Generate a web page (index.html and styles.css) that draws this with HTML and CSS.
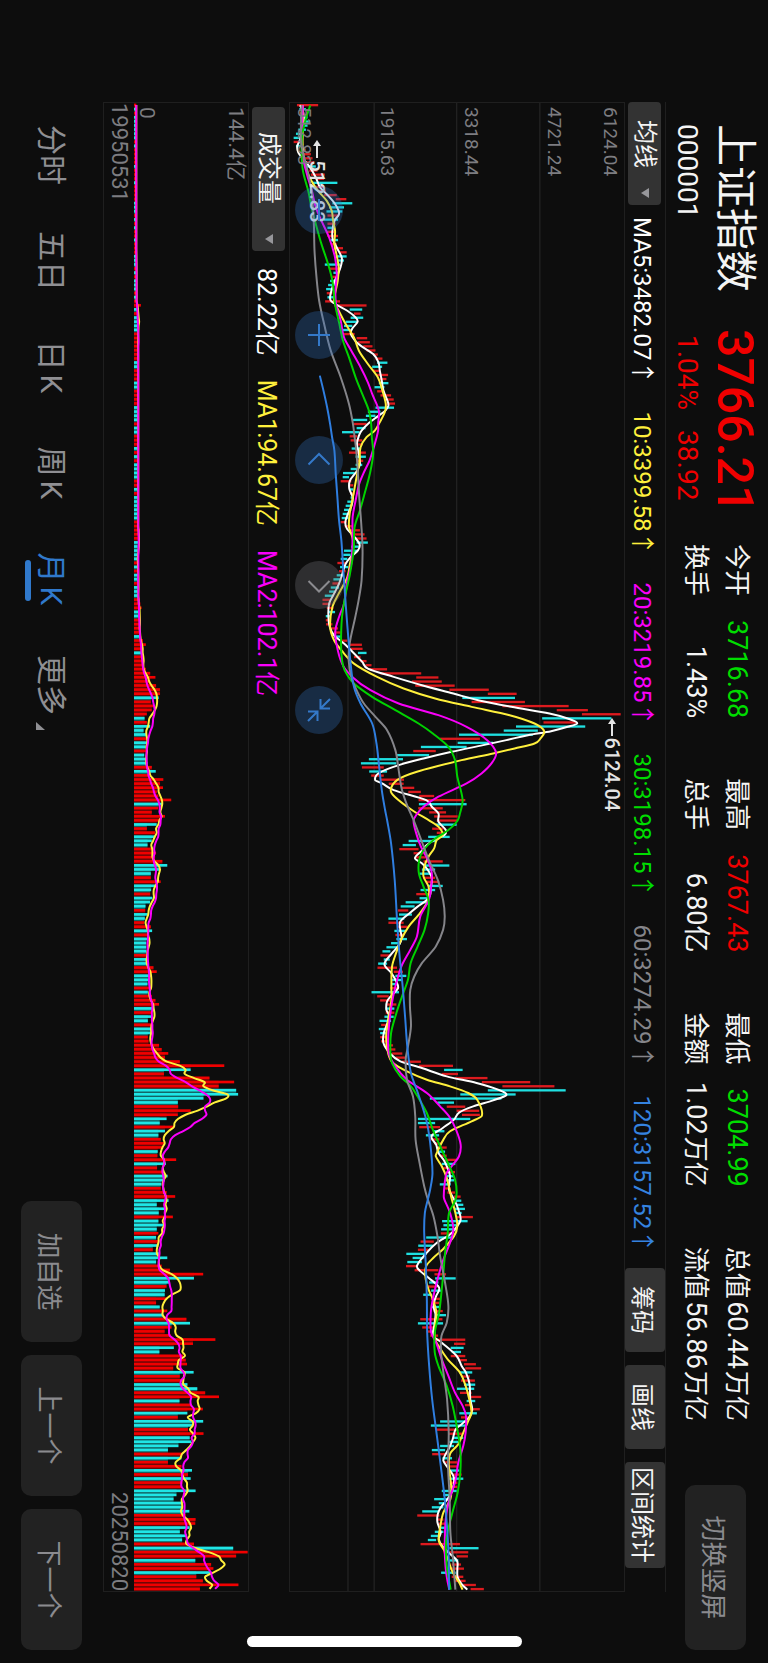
FILE: index.html
```html
<!DOCTYPE html>
<html lang="zh-CN">
<head>
<meta charset="utf-8">
<meta name="viewport" content="width=device-width, initial-scale=1">
<title>上证指数 000001</title>
<link rel="stylesheet" href="styles.css">
</head>
<body>
<main class="stage">
  <header class="quote-bar">
    <div class="quote">
      <h1 class="name">上证指数</h1>
      <strong class="price">3766.21</strong>
      <span class="code">000001</span>
      <span class="change"><span>1.04%</span><span>38.92</span></span>
    </div>
    <dl class="stats">
      <div class="stat"><dt>今开</dt><dd class="down">3716.68</dd></div>
      <div class="stat"><dt>最高</dt><dd class="up">3767.43</dd></div>
      <div class="stat"><dt>最低</dt><dd class="down">3704.99</dd></div>
      <div class="stat"><dt>总值</dt><dd>60.44<span class="unit">万亿</span></dd></div>
      <div class="stat"><dt>换手</dt><dd>1.43%</dd></div>
      <div class="stat"><dt>总手</dt><dd>6.80亿</dd></div>
      <div class="stat"><dt>金额</dt><dd>1.02<span class="unit">万亿</span></dd></div>
      <div class="stat"><dt>流值</dt><dd>56.86<span class="unit">万亿</span></dd></div>
    </dl>
    <button class="soft-button switch" type="button">切换竖屏</button>
  </header>

  <section class="ma-row">
    <button class="picker" type="button">均线<svg class="caret" viewBox="0 0 10 8"><path d="M0 0h10L5 8z"/></svg></button>
    <ul class="ma-list">
      <li class="c-white">MA5:3482.07<span>↑</span></li>
      <li class="c-yellow">10:3399.58<span>↑</span></li>
      <li class="c-magenta">20:3219.85<span>↑</span></li>
      <li class="c-green">30:3198.15<span>↑</span></li>
      <li class="c-gray">60:3274.29<span>↑</span></li>
      <li class="c-blue">120:3157.52<span>↑</span></li>
    </ul>
    <div class="tools">
      <button class="tool" type="button">筹码</button>
      <button class="tool" type="button">画线</button>
      <button class="tool tight" type="button">区间统计</button>
    </div>
  </section>

  <section class="pane price-pane">
    <svg class="plot" id="price" viewBox="0 0 4470 1008" preserveAspectRatio="none"></svg>
    <div class="axis">
      <div class="band first"><span>6124.04</span><span>4721.24</span></div>
      <div class="band"><span>3318.44</span></div>
      <div class="band"><span>1915.63</span></div>
      <div class="band"><span>512.83</span></div>
    </div>
    <span class="callout high"><svg viewBox="0 0 18 10"><path d="M5 5h13" stroke="#e4e4e4" stroke-width="2"/><path d="M0 5l6-4v8z" fill="#e4e4e4"/></svg>6124.04</span>
    <span class="callout low"><svg viewBox="0 0 18 10"><path d="M5 5h13" stroke="#e4e4e4" stroke-width="2"/><path d="M0 5l6-4v8z" fill="#e4e4e4"/></svg>512.83</span>
    <nav class="controls">
      <button type="button" aria-label="缩小"><svg viewBox="0 0 48 48"><path d="M13 24h22"/></svg></button>
      <button type="button" aria-label="放大"><svg viewBox="0 0 48 48"><path d="M13 24h22M24 13v22"/></svg></button>
      <button type="button" aria-label="向前"><svg viewBox="0 0 48 48"><path d="M28.500 13.500L18 24l10.500 10.500"/></svg></button>
      <button type="button" aria-label="向后" class="off"><svg viewBox="0 0 48 48"><path d="M20 13.500L30.500 24L20 34.500"/></svg></button>
      <button type="button" aria-label="收起"><svg viewBox="0 0 48 48"><path d="M13 13l9 9M22.500 13v9.500H13M35 35l-9-9M25.500 35v-9.500H35"/></svg></button>
    </nav>
  </section>

  <section class="volume-row">
    <button class="picker wide" type="button">成交量<svg class="caret" viewBox="0 0 10 8"><path d="M0 0h10L5 8z"/></svg></button>
    <ul class="volume-list">
      <li class="c-white">82.22亿</li>
      <li class="c-yellow">MA1:94.67亿</li>
      <li class="c-magenta">MA2:102.1亿</li>
    </ul>
  </section>

  <section class="pane volume-pane">
    <svg class="plot" id="volume" viewBox="0 0 4470 346" preserveAspectRatio="none"></svg>
    <div class="volume-axis"><span>144.4亿</span><span>0</span></div>
  </section>

  <div class="dates"><time>19950531</time><time>20250820</time></div>

  <footer class="bottom">
    <nav class="tabs">
      <button type="button" class="tab">分时</button>
      <button type="button" class="tab">五日</button>
      <button type="button" class="tab">日<span>K</span></button>
      <button type="button" class="tab">周<span>K</span></button>
      <button type="button" class="tab active">月<span>K</span></button>
      <button type="button" class="tab more">更多<svg viewBox="0 0 8 9"><path d="M8 0v9H0z"/></svg></button>
    </nav>
    <div class="actions">
      <button class="soft-button" type="button">加自选</button>
      <button class="soft-button" type="button">上一个</button>
      <button class="soft-button" type="button">下一个</button>
    </div>
  </footer>
</main>
<div class="home-bar"></div>
<script src="chart.js"></script>
</body>
</html>
```

FILE: styles.css
```css
* {
  box-sizing: border-box;
}

html,
body {
  margin: 0;
  height: 100%;
  background: #0d0d0d;
  overflow: hidden;
}

body {
  position: relative;
  font-family: Roboto, "Noto Sans CJK SC", sans-serif;
  color: #f4f4f4;
}

button {
  margin: 0;
  padding: 0;
  border: 0;
  background: none;
  color: inherit;
  font: inherit;
  white-space: nowrap;
}

ul,
dl,
dd,
h1 {
  margin: 0;
  padding: 0;
  list-style: none;
  font-weight: 400;
}

/* Landscape stage turned a quarter clockwise inside a portrait window */
.stage {
  position: absolute;
  top: 0;
  left: 0;
  width: 100vh;
  height: 100vw;
  transform-origin: 0 0;
  transform: rotate(90deg) translateY(-100%);
  display: grid;
  grid-template-columns: minmax(0, 1fr);
  grid-template-rows: 102px 41px 1fr 40px 115px 31px 103px;
  white-space: nowrap;
}

/* Header */
.quote-bar {
  display: flex;
  align-items: center;
  padding: 2px 13px 0 124px;
}

.quote {
  flex: none;
  align-self: flex-start;
  width: 420px;
  display: grid;
  grid-template-columns: 205px 1fr;
  grid-template-rows: 62px 34px;
  align-items: center;
}

.name {
  font-size: 42px;
  line-height: 62px;
}

.price {
  font-size: 50px;
  font-weight: 500;
  line-height: 62px;
  color: #f00000;
}

.code,
.change {
  font-size: 28px;
  line-height: 34px;
}

.change {
  display: flex;
  gap: 20px;
  padding-left: 6px;
  color: #f00000;
}

.stats {
  flex: 1;
  display: grid;
  grid-template-columns: repeat(4, 1fr);
  column-gap: 60px;
}

.stat {
  display: flex;
  justify-content: space-between;
  font-size: 26px;
  line-height: 41px;
}

.stat dd {
  font-size: 27px;
}

.unit {
  margin-left: 2px;
  font-size: 25px;
}

.up {
  color: #f00000;
}

.down {
  color: #00dc00;
}

.soft-button {
  height: 61px;
  border-radius: 10px;
  background: #222222;
  color: #8b8b8f;
  font-size: 26px;
}

.switch {
  flex: none;
  width: 165px;
  margin-left: 64px;
}

/* Moving averages */
.ma-row {
  margin: 0 71px 0 102px;
  border-top: 1px solid #1f1f1f;
  display: flex;
  align-items: center;
}

.picker {
  flex: none;
  height: 33px;
  padding: 0 7px 0 18px;
  border-radius: 4px;
  background: #333333;
  font-size: 24px;
  line-height: 33px;
  display: flex;
  align-items: center;
  gap: 20px;
}

.picker.wide {
  padding-left: 25px;
  gap: 30px;
}

.caret {
  width: 10px;
  height: 8px;
  fill: #97979b;
}

.ma-list {
  display: flex;
  gap: 27px;
  margin-left: 12px;
  font-size: 24px;
}

.ma-list span {
  font-family: "Noto Sans CJK SC", sans-serif;
}

.c-white { color: #ffffff; }
.c-yellow { color: #fff03c; }
.c-magenta { color: #fa00fa; }
.c-green { color: #00dc00; }
.c-gray { color: #85858a; }
.c-blue { color: #3583e0; }

.tools {
  display: flex;
  gap: 13px;
  margin-left: auto;
  padding-right: 24px;
}

.tool {
  height: 40px;
  padding: 0 18px;
  border-radius: 4px;
  background: #333333;
  font-size: 24px;
}

.tool.tight {
  padding: 0 5px;
}

/* Chart panes */
.pane {
  position: relative;
  margin: 0 71px 0 102px;
  border: 1px solid #1f1f1f;
  min-height: 0;
}

.volume-pane {
  border-bottom: 0;
}

.plot {
  position: absolute;
  inset: 0;
  width: 100%;
  height: 100%;
}

.axis {
  position: absolute;
  inset: 0;
  display: grid;
  grid-template-rows: repeat(4, 1fr);
  padding-left: 4px;
  font-size: 19px;
  line-height: 28px;
  color: #7d7d81;
}

.band {
  display: flex;
  flex-direction: column;
  justify-content: flex-end;
}

.band.first {
  justify-content: space-between;
}

.callout {
  position: absolute;
  display: flex;
  align-items: center;
  gap: 2px;
  font-size: 20px;
  font-weight: 500;
  line-height: 24px;
  color: #e4e4e4;
}

.callout svg {
  width: 18px;
  height: 10px;
}

.callout.high {
  left: 41.3%;
  top: 0;
}

.callout.low {
  left: 2.5%;
  bottom: 15px;
}

.controls {
  position: absolute;
  left: 83px;
  bottom: 5px;
  display: flex;
  gap: 77px;
}

.controls button {
  width: 48px;
  height: 48px;
  border-radius: 50%;
  background: rgba(50, 115, 195, 0.3);
}

.controls .off {
  background: rgba(110, 110, 115, 0.35);
}

.controls svg {
  display: block;
  width: 48px;
  height: 48px;
  fill: none;
  stroke: #3479c9;
  stroke-width: 2;
}

.controls .off svg {
  stroke: #8b8b8f;
}

/* Volume */
.volume-row {
  margin: 0 71px 0 107px;
  display: flex;
  align-items: center;
}

.volume-list {
  display: flex;
  gap: 24px;
  margin-left: 17px;
  font-size: 25px;
}

.volume-axis {
  position: absolute;
  inset: 0;
  display: flex;
  flex-direction: column;
  justify-content: space-between;
  padding-left: 4px;
  font-size: 21px;
  line-height: 25px;
  color: #7d7d81;
}

.dates {
  margin: 0 71px 0 102px;
  border: 1px solid #1f1f1f;
  border-top: 0;
  display: flex;
  justify-content: space-between;
  font-size: 22px;
  line-height: 30px;
  color: #7d7d81;
}

/* Bottom bar */
.bottom {
  display: flex;
  justify-content: space-between;
  align-items: center;
  padding: 0 13px 0 102px;
}

.tabs {
  display: flex;
}

.tab {
  position: relative;
  width: 106px;
  height: 52px;
  font-size: 30px;
  line-height: 52px;
  color: #8f8f93;
}

.tab span {
  margin-left: 4px;
}

.tab.active {
  color: #3079cc;
}

.tab.active::after {
  content: "";
  position: absolute;
  left: 34px;
  bottom: 0;
  width: 41px;
  height: 6px;
  border-radius: 3px;
  background: #3079cc;
}

.tab.more svg {
  position: absolute;
  right: 8px;
  bottom: 11px;
  width: 8px;
  height: 9px;
  fill: #8f8f93;
}

.actions {
  display: flex;
  gap: 13px;
}

.actions .soft-button {
  width: 141px;
}

.home-bar {
  position: absolute;
  left: 50%;
  bottom: 16px;
  width: 275px;
  height: 11px;
  margin-left: -137px;
  border-radius: 6px;
  background: #ffffff;
}
```

FILE: chart.js
```js
const NS = "http://www.w3.org/2000/svg";
const STEP = 4470 / 364;
const RED = "#dc1a1e";
const CYAN = "#1fdfe0";

// Monthly ranges, oldest first: r = rising, c = falling, then low-high
const candles = `
r48-112 c55-75 r55-70 c58-80 c60-88 c60-80 c52-75 c45-60 c38-60 r38-55
c45-60 r62-75 r60-90 r65-95 r75-100 c78-105 r85-110 r90-132 r105-130 c95-170
r105-130 r115-135 r130-168 r165-197 c155-215 c145-190 c137-185 r140-175 c128-172 r140-165
c140-158 r137-160 r140-172 c150-172 r152-168 r160-187 r178-198 c165-198 c170-190 c132-178
r145-180 c158-175 r155-172 c148-168 c142-162 c136-158 r138-155 c140-160 r133-178 r160-258
c207-245 r220-240 c210-248 c195-230 c190-215 c185-210 r185-222 r228-260 r232-268 r248-276
r258-285 r278-292 r285-306 c290-321 c275-305 r278-298 r290-323 r298-318 c295-324 c282-312
r290-312 r300-332 r315-340 r318-344 c285-341 c262-300 c256-285 c216-260 r220-258 c228-255
c184-237 r207-230 r210-245 r225-245 c213-240 r205-256 c225-256 r232-248 c225-245 c210-230
c187-222 c186-205 r180-212 r205-218 c205-218 r208-222 c210-220 c200-215 c195-212 c190-212
c186-205 c183-203 r180-198 r192-215 r205-238 r215-252 r225-258 c228-262 c212-235 c190-230
c188-210 c180-200 r170-195 c178-203 r175-195 c168-188 c158-182 r155-178 c150-175 c145-165
c132-158 r125-148 r125-150 r138-158 c142-163 c135-150 r135-150 r136-155 r150-172 r160-180
c160-182 r178-200 r205-244 r210-246 c232-258 r220-240 r240-258 r255-273 r268-320 r300-423
r408-475 r395-485 r405-524 r508-627 r624-711 c547-706 r575-736 r668-868 r832-926 r908-1025
c788-997 r792-890 c709-918 c672-775 c537-760 r480-600 c533-640 c422-560 r399-467 c350-447
c265-368 c241-348 r244-310 c266-320 r272-310 r300-371 r325-370 r362-402 r384-422 r417-462
r415-556 c416-560 r414-488 r447-498 r462-533 r470-532 c468-530 r456-490 r470-500 c444-509
c385-470 c367-407 r357-415 r400-430 r405-440 r430-488 c430-508 c425-465 c418-450 r430-465
r440-478 c445-488 c421-465 r408-447 c418-447 c376-445 c361-403 r353-384 c356-395 c324-372
r324-370 r352-382 c342-378 r345-370 c348-380 c332-362 c318-352 c306-330 r300-330 c310-328
c293-320 r291-350 r340-368 c345-378 c335-365 c332-352 r330-355 c273-356 r290-325 r299-330
r318-348 c315-342 r316-342 c312-340 c297-332 r302-325 c295-322 c299-320 r299-318 r302-318
r310-338 r325-345 r335-366 r345-377 r365-422 r416-519 c492-548 r485-534 r525-623 r606-752
r668-825 c624-859 c541-708 c449-665 c472-522 r500-556 r530-598 r546-600 c413-571 c413-465
r417-480 c460-493 c437-477 r447-478 r462-485 r470-500 c470-495 r478-500 r495-531 c485-526
r490-510 r500-525 c495-522 c495-522 c479-512 r495-512 r502-525 r522-542 c528-544 c528-550
c525-555 c525-545 r530-579 c486-563 c490-530 c483-528 r482-515 c438-515 r421-461 c414-458
r413-445 c378-440 c397-430 c381-425 r377-412 r403-475 r463-498 c465-527 c447-475 r443-470
c453-483 c429-456 r452-480 r455-478 c455-478 r460-488 c465-498 r420-487 c413-489 r426-460
r440-465 r450-474 r462-556 r522-556 c512-551 c515-543 r512-556 r535-561 r552-588 r556-604
c538-577 r545-570 r543-585 c552-586 c531-583 r540-575 r565-604 c560-586 r555-575 r570-600
c538-591 r543-565 c480-558 c452-556 r469-535 r507-548 c520-550 c508-535 c480-522 c455-495
r456-500 c487-516 r495-532 r500-532 c512-538 r520-545 c505-550 r510-532 r510-532 c485-530
c490-510 c462-505 c476-492 c455-490 c426-475 r411-478 r472-490 r475-497 c480-498 c464-490
c452-480 c443-468 r421-540 c508-596 r490-565 r530-564 c508-535 r515-543 r510-552 c483-527
r515-550 r525-557 r550-588 r572-612`.trim().split(/\s+/).map(t => {
  const [lo, hi] = t.slice(1).split("-").map(Number);
  return { up: t[0] === "r", lo, hi };
});

// Moving averages: each chunk starts with its origin, then "along level" pairs
const averages = [
  ["#ffffff", `
@-36 43 57,60 66,90 68,110 62,145 58,165 49,185 52,205 68,230 88,260 105,290 118,310 138,335 160,360 174,372 174,388 162,420 155,445 156,470 168,500 183,520 182,545 174,570 162,600 152,628 149,642 168,660 200,680 225,693 231,712 216,728 210,748 222,765 240,790 278,815 294,840 298,870 304,900 309,930 321,945 324,960 315,975 295,1000 262
@984 0 243,15 235,40 229,65 234,100 238,120 230,150 208,175 206,200 216,225 213,250 202,275 194,295 199,320 222,342 237,360 232,380 210,400 195,430 185,460 175,490 160,520 145,560 143,590 147,615 160,640 190,665 216,695 245,715 262,740 340,765 425,790 520,810 595,830 695,850 810,865 865,879 894,890 865,903 815,915 745,930 680,945 610,965 515,985 430,1005 355,1028 297,1050 284,1060 305,1080 340,1110 438,1130 455,1150 475
@2154 5 475,30 497,45 493,55 470,75 440,92 425,115 404,130 425,150 443,175 455,205 452,225 450,240 440,260 412,280 388,305 360,330 360,355 364,375 356,400 335,433 312,460 333,485 348,505 353,525 335,545 320,570 318,585 325,610 321,640 310,670 309,700 328,725 360,745 425,770 500,790 590,810 655,826 680,842 640,860 580,878 538,900 522,925 488,950 454,975 468,1000 475,1020 490,1040 500,1070 510,1110 507
@3294 5 525,30 535,60 542,85 528,105 510,130 470,165 435,200 410,215 420,235 445,265 477,290 468,305 463,325 461,345 466,375 463,410 460,430 485,470 530,500 545,520 558,555 569,600 571,632 577,655 567,675 545,690 527,720 518,745 508,770 494,785 490,805 503,830 520,850 522,880 515,905 498,925 482,945 473,970 472,1000 482,1020 476,1040 486,1060 505,1085 531,1110 532,1135 533,1155 545,1172 562`],
  ["#fff03c", `
@-36 43 66,100 67,150 65,200 68,240 78,270 92,300 112,330 138,360 153,390 157,420 163,460 161,490 167,530 174,570 171,600 165,630 160,660 174,700 195,740 220,780 235,820 262,860 292,900 306,940 316,965 313,1000 295
@984 0 283,20 258,50 240,90 237,150 226,200 217,250 207,290 205,310 212,330 217,360 217,400 208,440 200,490 174,530 155,590 148,630 160,660 182,700 220,740 290,775 370,805 465,830 575,855 690,880 765,903 794,925 783,940 765,955 705,970 640,990 545,1025 410,1050 350,1080 331,1100 343,1140 395
@2154 3 450,20 475,45 488,60 470,85 462,110 445,140 432,170 430,200 445,230 446,250 440,285 415,320 385,360 362,400 347,440 335,500 333,540 333,600 324,650 317,700 323,730 338,755 380,780 440,800 510,820 565,840 592,888 606,905 575,935 510,960 490,1000 470,1010 467,1040 485,1075 500,1130 513
@3294 40 526,80 532,110 522,150 488,175 460,200 438,235 436,270 445,300 458,340 469,380 465,420 465,450 482,480 503,520 540,560 557,600 568,640 575,665 565,700 550,735 535,760 512,790 506,830 510,870 514,900 511,940 490,980 481,1025 476,1055 493,1085 505,1120 518,1150 537,1172 548`],
  ["#fa00fa", `
@-36 43 66,100 64,150 62,200 66,250 78,300 93,350 105,390 122,440 145,500 163,550 168,600 164,640 166,690 180,740 190,780 212,830 240,875 262,910 275,960 295,1000 293
@984 0 293,50 280,90 267,130 248,160 236,210 225,260 216,320 216,400 212,450 200,520 190,560 175,600 164,640 167,700 184,740 215,780 270,820 355,855 475,890 560,930 622,968 649,1000 635,1030 605,1060 560,1100 475,1130 430,1155 408
@2154 3 400,40 408,80 422,120 443,160 455,200 453,240 446,290 420,350 410,390 390,440 363,500 345,560 333,640 324,700 325,740 345,780 380,820 440,860 480,890 507,930 528,975 542,1010 537,1040 515,1060 500,1090 494,1130 491
@3294 0 493,40 510,90 520,130 510,180 490,230 475,290 460,340 452,400 453,430 468,480 485,530 505,580 525,620 548,650 558,700 557,740 550,790 535,850 525,900 508,960 497,1050 494,1110 497,1145 502,1172 508`],
  ["#00d200", `
@-36 43 88,80 76,130 64,180 62,240 66,300 82,350 92,400 105,460 122,520 142,570 155,640 163,700 176,750 187,800 205,860 225,910 245,960 265,1000 272
@984 20 274,70 278,130 268,190 252,240 238,290 222,360 219,430 208,490 195,560 184,640 181,690 184,720 192,760 220,800 275,840 345,880 415,910 458,950 505,990 525,1040 532,1110 548,1150 540
@2154 3 532,30 505,60 460,90 430,120 417,160 416,200 430,240 445,280 444,330 433,380 412,430 391,480 383,530 365,580 348,640 332,700 330,730 335,770 360,800 392,830 412,880 440,930 458,980 480,1040 508,1080 525,1120 530
@3294 5 525,40 507,100 503,160 495,220 490,280 484,340 477,400 464,460 464,500 475,560 500,620 518,680 530,750 541,820 541,880 533,930 520,980 507,1030 498,1100 500,1172 512`],
  ["#85858a", `
@-36 43 62,150 60,200 70,240 80,300 92,400 99,480 101,560 107,630 115,700 130,780 150,860 180,940 205,1000 217
@984 20 222,60 227,130 232,200 236,280 242,360 246,450 243,510 234,560 224,640 207,690 204,740 212,780 228,820 250,860 285,900 320,960 345,1020 355,1080 365,1130 382
@2154 0 400,60 423,120 446,180 473,240 489,290 494,330 489,380 467,430 425,470 402,510 390,560 389,620 392,680 383,720 376,780 380,830 398,890 405,960 406,1030 418,1100 432
@3294 0 443,50 460,110 472,170 480,250 495,320 505,370 500,410 484,460 483,520 490,600 501,700 506,800 504,900 509,1000 511,1080 519,1172 526`],
  ["#2f7ee0", `
@-36 855 117,900 128,950 139,1000 148
@984 20 154,60 161,130 165,200 170,270 175,330 182,390 186,450 190,560 198,700 210,770 220,820 240,880 275,940 288,1000 295,1080 304,1140 314
@2154 0 320,70 332,180 343,300 350,400 357,500 367,600 375,680 381,760 392,820 413,900 438,970 450,1060 457,1110 450
@3294 0 443,40 434,100 432,200 437,300 440,400 441,500 447,600 456,700 469,800 482,900 494,1000 502,1080 506,1172 507`]
];

// Monthly volume, baseline 401, ceiling 747
const volumes = (
  "408 ".repeat(36) + "409 ".repeat(13) + "422 416 415 414 416 414 413 413 " + "414 ".repeat(47) + `
418 418 417 414 412 412 412 412 416 414 416 414 414 416 414 414 413 418 420 424
416 415 420 420 421 421 420 428 437 430 422 430 432 432 437 450 466 450 468 480
480 476 452 460 455 440 433 440 450 430 440 445 442 436 440 432 440 442 455 467
450 490 480 489 470 475 514 486 475 455 495 480 470 440 465 465 455 442 455 468
465 487 502 478 452 452 482 466 453 450 457 450 436 435 443 434 432 452 456 445
450 438 438 438 442 440 442 460 470
452 445 442 455 443 455 466 477 462 455 455 443 457 455 455 443 445 477 485 505
495 540 675 573 492 630 705 658 711 717 612 534 535 573 534 500 479 524 495 475
482 495 490 473 472 529 498 471 487 503 495 484 482 500 526 506 470 500 476 519
475 492 470 475 468 475 475 458 478 502 468 485 510 611 583 510 500 495 494 500
468 479 502 490 560 571 515 494 512 648 580 522 478 550 558 562 520 582 540 550
563 593 617 659 539 575 610 563 534 611 580 565 612 570 575 536 504 548 545 504
545 577 565 573 548 545 588 530 521 548 550 569 558 588 587 570 540 562 547 583
702 746 711 587 635 642 632 590 610 718 601`).trim().split(/\s+/).map(Number).slice(-364);

function add(svg, tag, attrs) {
  const el = document.createElementNS(NS, tag);
  for (const key in attrs) el.setAttribute(key, attrs[key]);
  svg.appendChild(el);
}

function smooth(points) {
  let d = `M${points[0][0]} ${points[0][1]}`;
  for (let i = 0; i < points.length - 1; i++) {
    const a = points[i - 1] || points[i], b = points[i];
    const c = points[i + 1], e = points[i + 2] || c;
    const third = (c[0] - b[0]) / 3;
    const s1 = (c[1] - a[1]) / (c[0] - a[0] || 1);
    const s2 = (e[1] - b[1]) / (e[0] - b[0] || 1);
    d += `C${b[0] + third} ${b[1] + s1 * third} ${c[0] - third} ${c[1] - s2 * third} ${c[0]} ${c[1]}`;
  }
  return d;
}

function parse(text) {
  const out = [];
  text.trim().split("\n").forEach(row => {
    const cut = row.indexOf(" ");
    const origin = Number(row.slice(1, cut));
    row.slice(cut + 1).split(",").forEach(pair => {
      const [u, v] = pair.split(" ").map(Number);
      out.push([origin + u, 1035 - v]);
    });
  });
  return out;
}

const price = document.getElementById("price");
[252, 503, 752].forEach(y => add(price, "rect", { x: 0, y, width: 4470, height: 4, fill: "#222222" }));
add(price, "rect", { x: 1690, y: 831, width: 2780, height: 4, fill: "#222222" });
candles.forEach((k, i) => add(price, "rect", {
  x: i * STEP + 3, y: 1035 - k.hi, width: 7, height: k.hi - k.lo, fill: k.up ? RED : CYAN
}));
averages.forEach(([color, text]) => add(price, "path", {
  d: smooth(parse(text)), fill: "none", stroke: color, "stroke-width": 6, "stroke-linejoin": "round"
}));

const volume = document.getElementById("volume");
volumes.forEach((v, i) => {
  const fill = candles[i].up ? "#f00000" : "#1fe6e6";
  const next = Math.min(v, volumes[i + 1] || v);
  add(volume, "rect", { x: i * STEP + 2, y: 747 - next, width: STEP, height: next - 401, fill, opacity: 0.4 });
  add(volume, "rect", { x: i * STEP + 2, y: 747 - v, width: 8, height: v - 401, fill });
});
[[5, "#fff03c"], [10, "#fa00fa"]].forEach(([span, stroke]) => {
  const points = volumes.map((v, i) => {
    const part = volumes.slice(Math.max(0, i - span + 1), i + 1);
    return [i * STEP + 6, 747 - part.reduce((a, b) => a + b) / part.length];
  });
  add(volume, "path", { d: smooth(points), fill: "none", stroke, "stroke-width": 6, "stroke-linejoin": "round" });
});
```
